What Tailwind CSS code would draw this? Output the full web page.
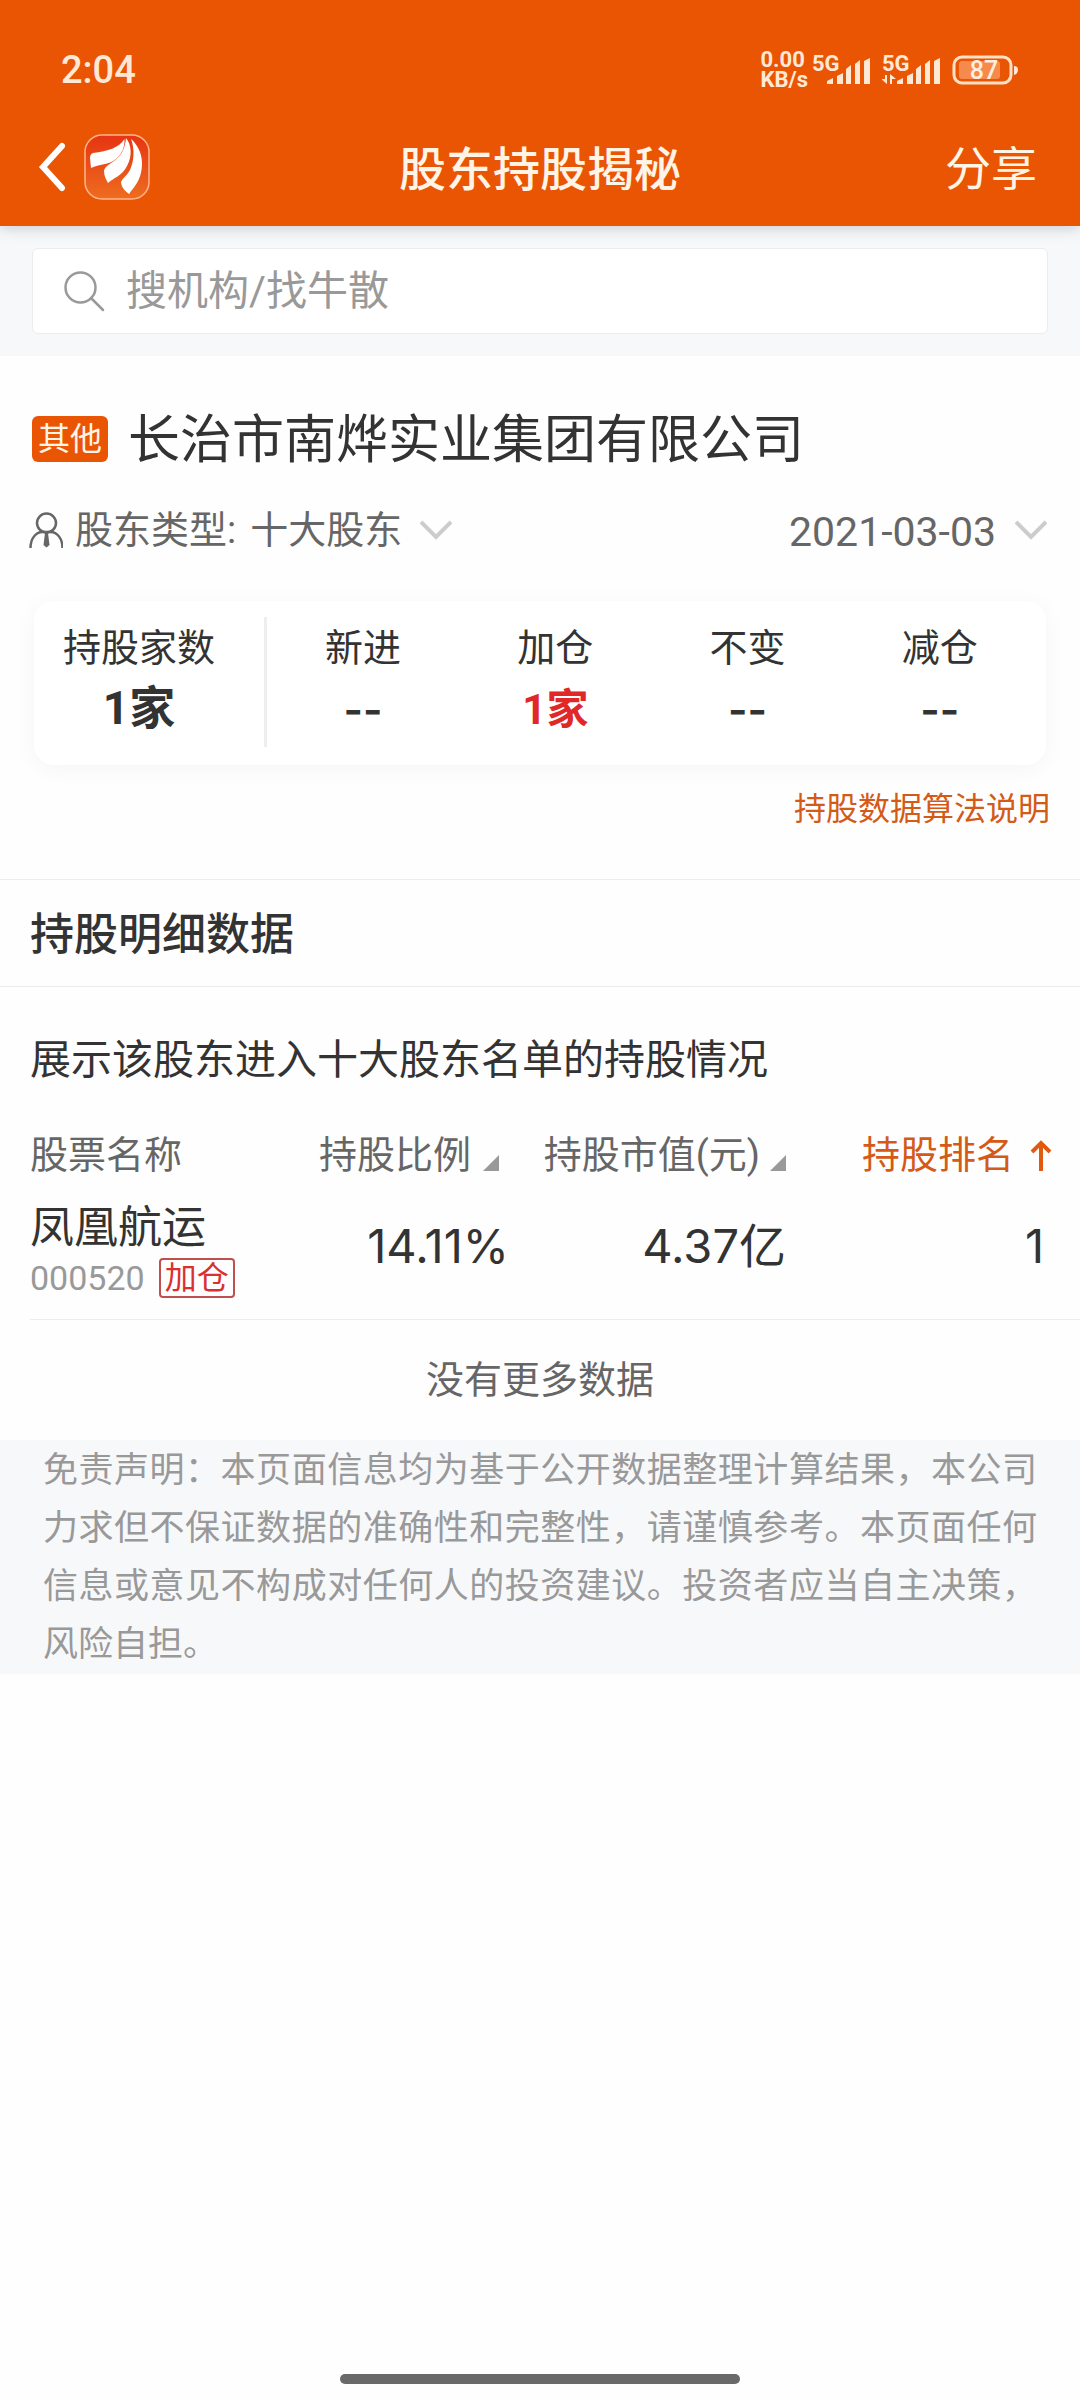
<!DOCTYPE html>
<html lang="zh-CN">
<head>
<meta charset="utf-8">
<meta name="viewport" content="width=device-width, initial-scale=1">
<title>股东持股揭秘</title>
<script src="https://cdn.jsdelivr.net/npm/@tailwindcss/browser@4"></script>
</head>
<body class="flex min-h-screen flex-col bg-[#fefefe] font-['Roboto','Noto_Sans_CJK_SC',sans-serif] text-[#333]">

<header class="relative z-10 bg-[#ea5504] text-[#fff4e6] shadow-[0_2px_14px_rgba(60,80,90,0.25)]">
  <!-- status bar -->
  <div class="flex h-[112px] items-center justify-between pt-7 pr-[60px] pl-[61px]">
    <span class="text-[38px] font-medium text-[#ffe9d6]">2:04</span>
    <div class="flex items-center text-[#ffe9d6]">
      <p class="text-[22px] leading-5 font-bold">0.00<br>KB/s</p>
      <svg class="ml-1 h-9 w-[58px]" viewBox="0 0 58 36" fill="currentColor" aria-label="5G">
        <text x="0" y="19" font-size="22" font-weight="700">5G</text>
        <path d="M15 32v-3l6-3v6zM25 32v-8l6-3v11zM34 32V17l5-4v19zM43 32V12l5-4v24zM52 32V9l6-3v26z"/>
      </svg>
      <svg class="ml-3 h-9 w-[58px]" viewBox="0 0 58 36" fill="currentColor" aria-label="5G">
        <text x="0" y="19" font-size="22" font-weight="700">5G</text>
        <path d="M15 32v-3l6-3v6zM25 32v-8l6-3v11zM34 32V17l5-4v19zM43 32V12l5-4v24zM52 32V9l6-3v26z"/>
        <path d="M3 23h2v9L-1 27h4zM8 32h2v-5h4L8 22z"/>
      </svg>
      <svg class="ml-3 h-9 w-[68px]" viewBox="0 0 68 36" aria-label="87%">
        <rect x="2" y="5" width="57" height="26" rx="8" fill="none" stroke="#ffe0c4" stroke-width="3"/>
        <rect x="7" y="9" width="41" height="18" rx="3" fill="#f58a4c"/>
        <path d="M62 14q4 0 4 4t-4 5z" fill="#ffe9d6"/>
        <text x="32" y="27" font-size="25" font-weight="500" fill="#ffeedd" text-anchor="middle">87</text>
      </svg>
    </div>
  </div>
  <!-- title bar -->
  <div class="grid h-[114px] grid-cols-[1fr_auto_1fr] items-center px-[37px]">
    <div class="flex items-center gap-[18px] pb-1">
      <button type="button" aria-label="返回">
        <svg class="h-[50px] w-[29px]" viewBox="0 0 29 50" fill="none" stroke="#fff" stroke-width="6" stroke-linecap="round" stroke-linejoin="miter"><path d="M25 4 6 25l19 21"/></svg>
      </button>
      <svg class="h-[66px] w-[66px]" viewBox="0 0 66 66" aria-hidden="true">
        <defs><linearGradient id="logo" x1="0" y1="0" x2="0" y2="1"><stop offset="0" stop-color="#e63412"/><stop offset="1" stop-color="#ed6d1f"/></linearGradient></defs>
        <rect x="1" y="1" width="64" height="64" rx="17" fill="url(#logo)" stroke="#ffb48c" stroke-width="1.5"/>
        <g fill="#fff">
          <path d="M40.500 5C35 14 24 17 9 19q-3 1-3 5l1 10c8-4 18-3 25-9 6-5 9-12 8.500-20z"/>
          <path d="M42 4c-1 11-5 18-12 23-5 4-9 5-10 10 0 5 2 8 4 12 5-5 14-7 19-17 6-11 4-22-1-28z"/>
          <path d="M47 5c4 11 3 22-1 31-3 6-9 9-9 13 1 5 4 8 8 11 5-7 13-14 13-31C58 19 53 10 47 5z"/>
        </g>
      </svg>
    </div>
    <h1 class="text-[47px] leading-none font-medium">股东持股揭秘</h1>
    <button type="button" class="mr-[6px] justify-self-end text-[46px] leading-none">分享</button>
  </div>
</header>

<main>
  <form class="bg-[#f7f8fa] px-8 py-[22px]">
    <label class="flex h-[86px] items-center gap-[21px] rounded-[6px] border border-[#ececec] bg-white pl-[30px]">
      <svg class="h-[42px] w-[42px] shrink-0" viewBox="0 0 42 42" fill="none" stroke="#999" stroke-width="2.500" stroke-linecap="round"><circle cx="17.500" cy="17.500" r="15"/><path d="m28 28 12 12"/></svg>
      <input type="search" aria-label="搜索" placeholder="搜机构/找牛散" class="h-[60px] min-w-0 flex-1 pt-[2px] text-[41px] outline-none placeholder:text-[#999]">
    </label>
  </form>

  <section class="pt-[50px]">
    <div class="flex items-center gap-5 px-8">
      <span class="rounded-[6px] bg-[#ea5504] px-[6px] text-[32px] leading-[46px] text-[#fff4e6]">其他</span>
      <h2 class="pt-1 text-[52px] leading-[62px] text-[#333]">长治市南烨实业集团有限公司</h2>
    </div>

    <div class="mt-[28px] flex h-[60px] items-center justify-between pr-[33px] pl-[29px] text-[#666]">
      <div class="flex items-center text-[38px]">
        <svg class="mr-3 h-[36px] w-[34px]" viewBox="0 0 34 36" fill="none" stroke="#666" stroke-width="2.500"><circle cx="17.500" cy="11" r="9.500"/><path d="M1.500 36c0-9 5-16 12-16h8c7 0 12 7 12 16"/><path d="m16 21-1.500 12 3 2.500 3-2.500L19 21z" fill="#666" stroke="none"/></svg>
        <label for="type">股东类型:</label>
        <select id="type" class="ml-[14px] h-[56px] appearance-none"><option>十大股东</option></select>
        <svg class="ml-[17px] h-5 w-8" viewBox="0 0 32 20" fill="none" stroke="#ccc" stroke-width="4"><path d="m1 2 15 15L31 2"/></svg>
      </div>
      <div class="flex items-center text-[41px]">
        <select aria-label="日期" class="h-[56px] appearance-none"><option>2021-03-03</option></select>
        <svg class="ml-[18px] h-5 w-8" viewBox="0 0 32 20" fill="none" stroke="#ccc" stroke-width="4"><path d="m1 2 15 15L31 2"/></svg>
      </div>
    </div>

    <div class="mx-[34px] mt-[41px] flex rounded-[20px] bg-white pt-4 pr-[10px] pb-[18px] text-center shadow-[0_4px_24px_rgba(0,0,0,0.04)]">
      <dl class="mr-5 w-[210px] pt-[6px]">
        <dt class="text-[38px] leading-[50px]">持股家数</dt>
        <dd class="mt-1 text-[46px] leading-[62px] font-bold">1家</dd>
      </dl>
      <dl class="grid flex-1 grid-cols-4 border-l-[3px] border-[#eee] pt-[6px] pb-1">
        <div><dt class="text-[38px] leading-[50px]">新进</dt><dd class="mt-1 font-['Inter'] text-[42px] leading-[66px] font-semibold">--</dd></div>
        <div><dt class="text-[38px] leading-[50px]">加仓</dt><dd class="mt-1 text-[42px] leading-[66px] font-bold text-[#e02828]">1家</dd></div>
        <div><dt class="text-[38px] leading-[50px]">不变</dt><dd class="mt-1 font-['Inter'] text-[42px] leading-[66px] font-semibold">--</dd></div>
        <div><dt class="text-[38px] leading-[50px]">减仓</dt><dd class="mt-1 font-['Inter'] text-[42px] leading-[66px] font-semibold">--</dd></div>
      </dl>
    </div>

    <div class="mt-[24px] flex justify-end pr-[30px] pb-[50px]">
      <a href="#" class="text-[32px] leading-10 text-[#d35a17]">持股数据算法说明</a>
    </div>
  </section>

  <section>
    <h2 class="border-y border-[#ececec] pt-1 pl-[30px] text-[44px] leading-[102px] font-medium">持股明细数据</h2>
    <p class="mt-[43px] pl-[30px] text-[41px] leading-[60px]">展示该股东进入十大股东名单的持股情况</p>

    <div class="mt-[35px] pl-[30px]">
      <table class="w-full table-fixed">
        <thead>
          <tr class="h-[60px] text-[38px] whitespace-nowrap text-[#666]">
            <th scope="col" class="w-[24%] p-0 text-left font-normal">股票名称</th>
            <th scope="col" class="w-[22%] p-0 pr-[14px] font-normal">
              <button type="button" class="flex w-full items-center justify-end gap-3">持股比例<svg class="mt-4 h-4 w-4" viewBox="0 0 16 16" fill="#999"><path d="M16 0v16H0z"/></svg></button>
            </th>
            <th scope="col" class="w-[26%] p-0 font-normal">
              <button type="button" class="flex w-full items-center justify-end gap-[10px]">持股市值(元)<svg class="mt-4 h-4 w-4" viewBox="0 0 16 16" fill="#999"><path d="M16 0v16H0z"/></svg></button>
            </th>
            <th scope="col" class="p-0 pr-7 font-normal text-[#d35a17]" aria-sort="ascending">
              <button type="button" class="flex w-full items-center justify-end gap-4">持股排名<svg class="h-8 w-[22px]" viewBox="0 0 22 32" fill="none" stroke="#e05a10" stroke-width="4"><path d="M11 32V4M2 13l9-9 9 9"/></svg></button>
            </th>
          </tr>
        </thead>
        <tbody>
          <tr class="border-b border-[#ececec] text-right font-['Inter','Noto_Sans_CJK_SC',sans-serif] text-[47px]">
            <td class="p-0 pt-5 pb-[21px] text-left font-['Roboto','Noto_Sans_CJK_SC',sans-serif]">
              <div class="text-[44px] leading-[46px]">凤凰航运</div>
              <div class="mt-[7px] flex items-center gap-[14px]">
                <span class="text-[34px] leading-10 text-[#999]">000520</span>
                <span class="rounded-[4px] border-2 border-[#c0504d] px-1 text-[32px] leading-9 text-[#d93030]">加仓</span>
              </div>
            </td>
            <td class="p-0 pr-1 pb-3 leading-[60px]">14.11%</td>
            <td class="p-0 pb-3 leading-[60px]">4.37亿</td>
            <td class="p-0 pr-9 pb-3 leading-[60px]">1</td>
          </tr>
        </tbody>
      </table>
    </div>

    <p class="py-[30px] text-center text-[38px] leading-[60px] text-[#666]">没有更多数据</p>
    <p class="bg-[#f7f8fa] px-[43px] pt-[2px] text-justify text-[35px] leading-[58px] text-[#999]">免责声明：本页面信息均为基于公开数据整理计算结果，本公司力求但不保证数据的准确性和完整性，请谨慎参考。本页面任何信息或意见不构成对任何人的投资建议。投资者应当自主决策，风险自担。</p>
  </section>
</main>

<div class="mx-auto mt-auto mb-4 h-[10px] w-[400px] rounded-full bg-[#696969]"></div>
</body>
</html>
